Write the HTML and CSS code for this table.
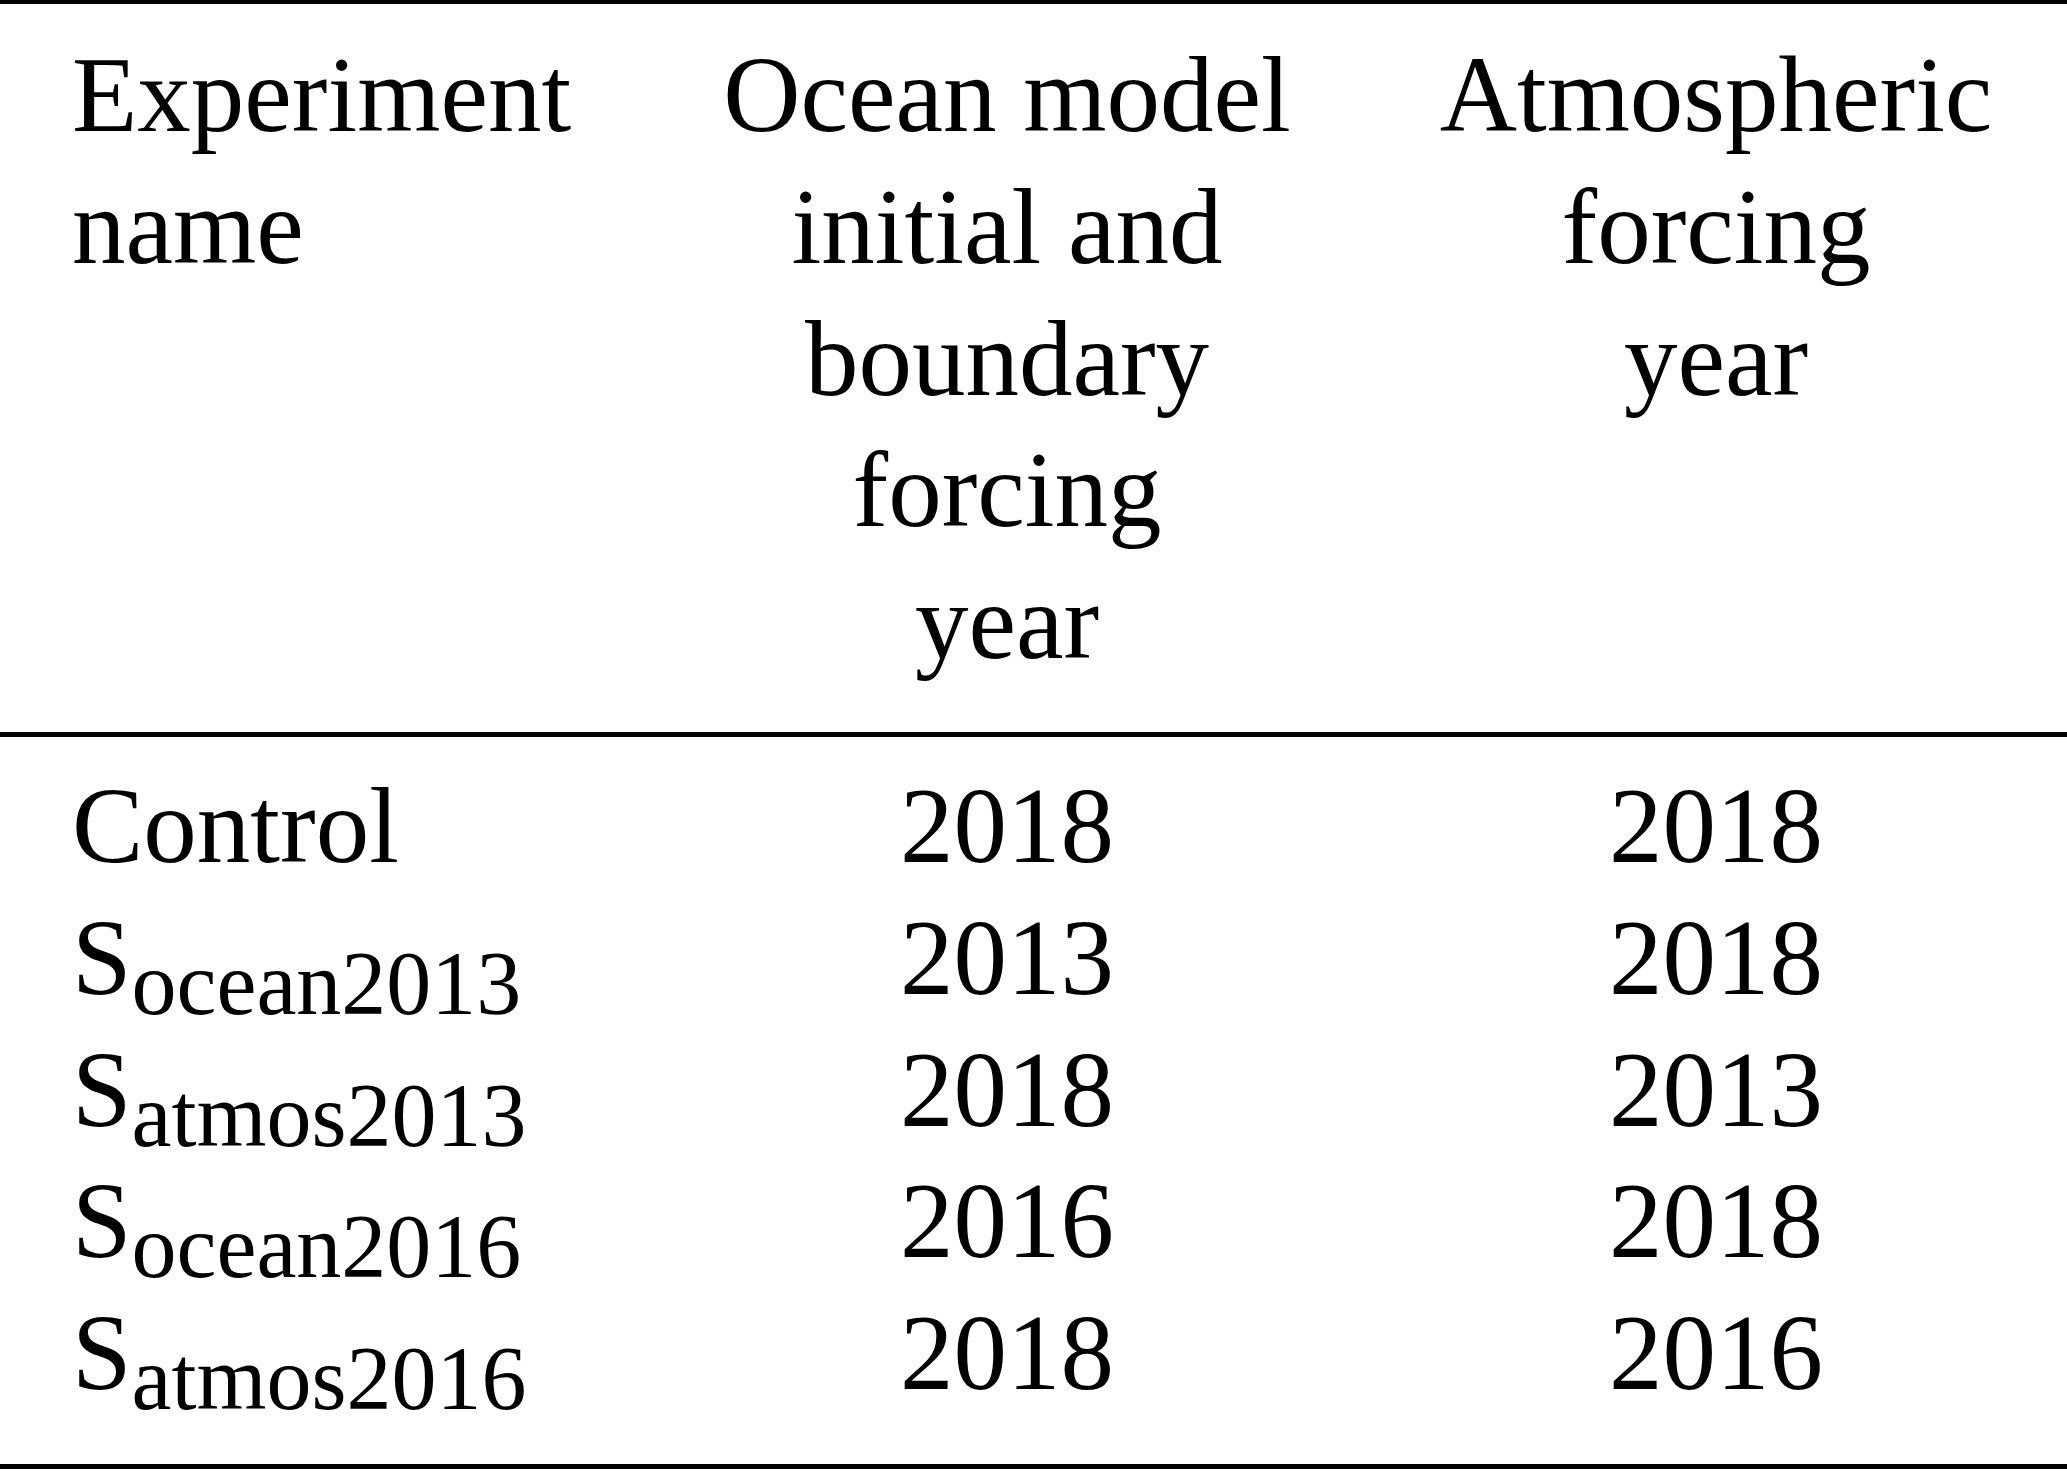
FILE: index.html
```html
<!DOCTYPE html>
<html lang="en">

<head>
    <meta charset="UTF-8">
    <title>Experiments</title>
    <link rel="stylesheet" href="styles.css">
</head>

<body>
    <!-- Sensitivity experiment table -->
    <table class="runs">
        <colgroup>
            <col class="col-name">
            <col class="col-ocean">
            <col class="col-atmos">
        </colgroup>
        <thead>
            <tr>
                <th class="name">Experiment<br>name</th>
                <th>Ocean model<br>initial and<br>boundary<br>forcing<br>year</th>
                <th>Atmospheric<br>forcing<br>year</th>
            </tr>
        </thead>
        <tbody>
            <tr class="first">
                <td class="name">Control</td>
                <td>2018</td>
                <td>2018</td>
            </tr>
            <tr>
                <td class="name">S<sub>ocean2013</sub></td>
                <td>2013</td>
                <td>2018</td>
            </tr>
            <tr>
                <td class="name">S<sub>atmos2013</sub></td>
                <td>2018</td>
                <td>2013</td>
            </tr>
            <tr>
                <td class="name">S<sub>ocean2016</sub></td>
                <td>2016</td>
                <td>2018</td>
            </tr>
            <tr class="last">
                <td class="name">S<sub>atmos2016</sub></td>
                <td>2018</td>
                <td>2016</td>
            </tr>
        </tbody>
    </table>
</body>

</html>
```

FILE: styles.css
```css
body {
    margin: 0;
    padding: 0;
    background-color: #fff;
    color: #000;
    font-family: "Liberation Serif", "Times New Roman", serif;
}

.runs {
    width: 2067px;
    table-layout: fixed;
    border-collapse: separate;
    border-spacing: 0;
    font-size: 107px;
    line-height: 131.8px;
}

.col-name {
    width: 649px;
}

.col-ocean {
    width: 716px;
}

.col-atmos {
    width: 702px;
}

.runs th,
.runs td {
    padding: 0;
    text-align: center;
    vertical-align: top;
    font-weight: normal;
    white-space: nowrap;
}

.runs .name {
    text-align: left;
    padding-left: 72px;
}

/* Header block between the top and middle rules */
.runs thead th {
    border-top: 4px solid #000;
    border-bottom: 5px solid #000;
    padding-top: 26px;
    padding-bottom: 43px;
}

.runs tr.first td {
    padding-top: 24px;
}

.runs tr.last td {
    padding-bottom: 44px;
    border-bottom: 5px solid #000;
}

sub {
    font-size: 90px;
    line-height: 0;
    vertical-align: -20px;
}
```
